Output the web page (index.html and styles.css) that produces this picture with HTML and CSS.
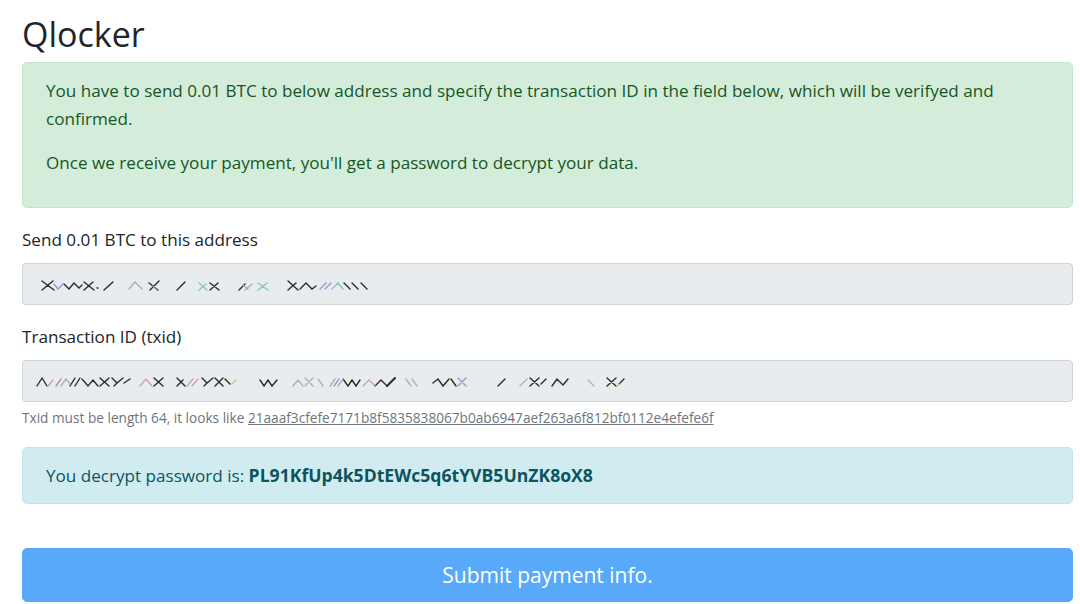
FILE: index.html
```html
<!DOCTYPE html>
<html lang="en">
  <head>
    <meta charset="UTF-8" />
    <title>Qlocker</title>
    <link rel="stylesheet" href="styles.css">
  </head>
  <body>
    <div class="page">
      <h2 class="title">Qlocker</h2>

      <div class="alert alert-success">
        <p>You have to send 0.01 BTC to below address and specify the transaction ID in the field below, which will be verifyed and confirmed.</p>
        <p>Once we receive your payment, you'll get a password to decrypt your data.</p>
      </div>

      <!-- address (blurred out) -->
      <div class="form-group">
        <label class="label">Send 0.01 BTC to this address</label>
        <div class="field field-address">
          <svg class="scribble" width="340" height="16" viewBox="0 0 340 16">
            <g stroke="#2b2b2b">
              <path d="M6 3 L18 12 M6 12 L17 3 M28 6 L33 11 L38 5 L43 10 L46 7 M48 4 L58 12 M48 12 L57 4 M61 10 L62 10 M68 12 L77 4 M113 5 L122 12 M114 12 L123 3 M141 12 L149 4 M174 5 L183 12 M174 12 L182 5 M203 12 L209 6 M252 3 L262 12 M252 12 L260 5 M264 11 L270 5 L276 11 L280 8 M308 5 L314 11 M316 5 L322 11 M325 5 L331 11"/>
            </g>
            <g stroke="#a9b0b0">
              <path d="M93 11 L99 4 L106 11 M207 7 L212 11 M209 12 L216 6"/>
            </g>
            <g stroke="#86c6c0">
              <path d="M163 5 L171 12 M163 12 L170 6 M222 5 L232 12 M222 12 L231 5 M296 11 L302 5 L307 11"/>
            </g>
            <g stroke="#a98fcf">
              <path d="M18 6 L22 11 L27 6 M117 8 L121 12 M284 11 L290 5 M289 11 L295 5"/>
            </g>
          </svg>
        </div>
      </div>

      <!-- txid (blurred out) -->
      <div class="form-group form-group-tx">
        <label class="label">Transaction ID (txid)</label>
        <div class="field field-tx">
          <svg class="scribble" width="610" height="16" viewBox="0 0 610 16">
            <g stroke="#2b2b2b">
              <path d="M7 11 L12 3 L17 11 M40 11 L45 3 M45 11 L50 3 M52 4 L58 11 L63 5 L68 11 M70 3 L79 11 M70 11 L79 3 M82 3 L87 8 L93 3 M87 8 L84 11 M94 8 L100 4 M124 3 L133 11 M124 11 L133 3 M147 3 L155 11 M147 11 L153 5 M172 3 L177 8 L183 3 M177 8 L174 11 M185 3 L193 11 M185 11 L193 3 M195 4 L200 9 M230 5 L234 11 L238 5 L242 11 L247 5 M313 4 L318 11 L322 5 M322 5 L326 11 L330 5 M345 11 L351 5 L357 11 M403 8 L408 4 L413 11 L419 4 M421 4 L426 11 M468 11 L475 4 M500 3 L509 11 M500 11 L509 3 M511 9 L516 4 M522 11 L527 4 L533 10 L538 4 M577 3 L586 11 M577 11 L586 3 M589 9 L594 4"/>
              <path class="thick" d="M357 11 L365 3"/>
            </g>
            <g stroke="#d19fb0">
              <path d="M18 11 L23 5 M110 11 L116 4 L122 11 M157 11 L163 4 M162 11 L168 4 M333 11 L339 5 L345 11 M558 5 L564 11"/>
            </g>
            <g stroke="#a394cc">
              <path d="M26 11 L31 4 M304 11 L309 4 M428 3 L436 11 M428 11 L436 3"/>
            </g>
            <g stroke="#aeb2b4">
              <path d="M31 11 L36 4 L40 9 M263 11 L268 5 L273 11 M275 3 L283 11 M275 11 L283 3 M288 4 L293 11 M300 11 L305 4 M308 11 L313 4 M376 4 L381 11 M382 4 L387 11 M490 11 L497 4"/>
            </g>
            <g stroke="#dcbf6a">
              <path d="M202 9 L206 5 M587 11 L590 9"/>
            </g>
          </svg>
        </div>
        <small class="hint">Txid must be length 64, it looks like <a href="#">21aaaf3cfefe7171b8f5835838067b0ab6947aef263a6f812bf0112e4efefe6f</a></small>
      </div>

      <div class="alert alert-info">
        You decrypt password is: <b>PL91KfUp4k5DtEWc5q6tYVB5UnZK8oX8</b>
      </div>

      <button class="btn-submit" disabled>Submit payment info.</button>
    </div>
  </body>
</html>
```

FILE: styles.css
```css
body {
  margin: 0;
  font-family: "Open Sans", "Noto Sans", sans-serif;
  font-size: 17.1px;
  line-height: 28px;
  color: #212529;
  background: #fff;
}
.page {
  width: 1051px;
  margin-left: 22px;
}
.title {
  margin: 0;
  padding-top: 12px;
  height: 50px;
  font-size: 34px;
  font-weight: 400;
  line-height: 44px;
  color: #212529;
}
.alert {
  border: 1px solid transparent;
  border-radius: 5px;
  padding: 14px 23px;
  margin-bottom: 18px;
}
.alert-success {
  background-color: #d4edda;
  border-color: #c3e6cb;
  color: #155724;
}
.alert-success p {
  margin: 0 0 16px 0;
}
.alert-info {
  background-color: #d1ecf1;
  border-color: #bee5eb;
  color: #0c5460;
  padding: 13px 23px;
  margin-bottom: 44px;
}
.alert-info b {
  font-size: 17.6px;
  font-weight: 700;
}
.form-group {
  margin-bottom: 18px;
}
.form-group-tx {
  margin-bottom: 19px;
}
.label {
  display: block;
  margin-bottom: 9px;
}
.field {
  display: flex;
  align-items: center;
  box-sizing: border-box;
  height: 42px;
  background-color: #e9ecef;
  border: 1px solid #ced4da;
  border-radius: 4px;
}
.field-address {
  padding: 4px 0 0 13px;
}
.field-tx {
  padding: 3px 0 0 7px;
}
.scribble {
  display: block;
  fill: none;
}
.scribble path {
  stroke-width: 1.4;
  stroke-linecap: round;
}
.scribble .thick {
  stroke-width: 2;
}
.hint {
  display: block;
  margin-top: 6px;
  font-size: 13.65px;
  line-height: 20px;
  color: #6c757d;
}
.hint a {
  color: #6c757d;
  text-decoration: underline;
}
.btn-submit {
  display: block;
  width: 100%;
  height: 54px;
  padding: 0;
  font-family: "Open Sans", "Noto Sans", sans-serif;
  font-size: 21px;
  color: #fff;
  background-color: #59a9fb;
  border: 1px solid #59a9fb;
  border-radius: 5px;
}
```
